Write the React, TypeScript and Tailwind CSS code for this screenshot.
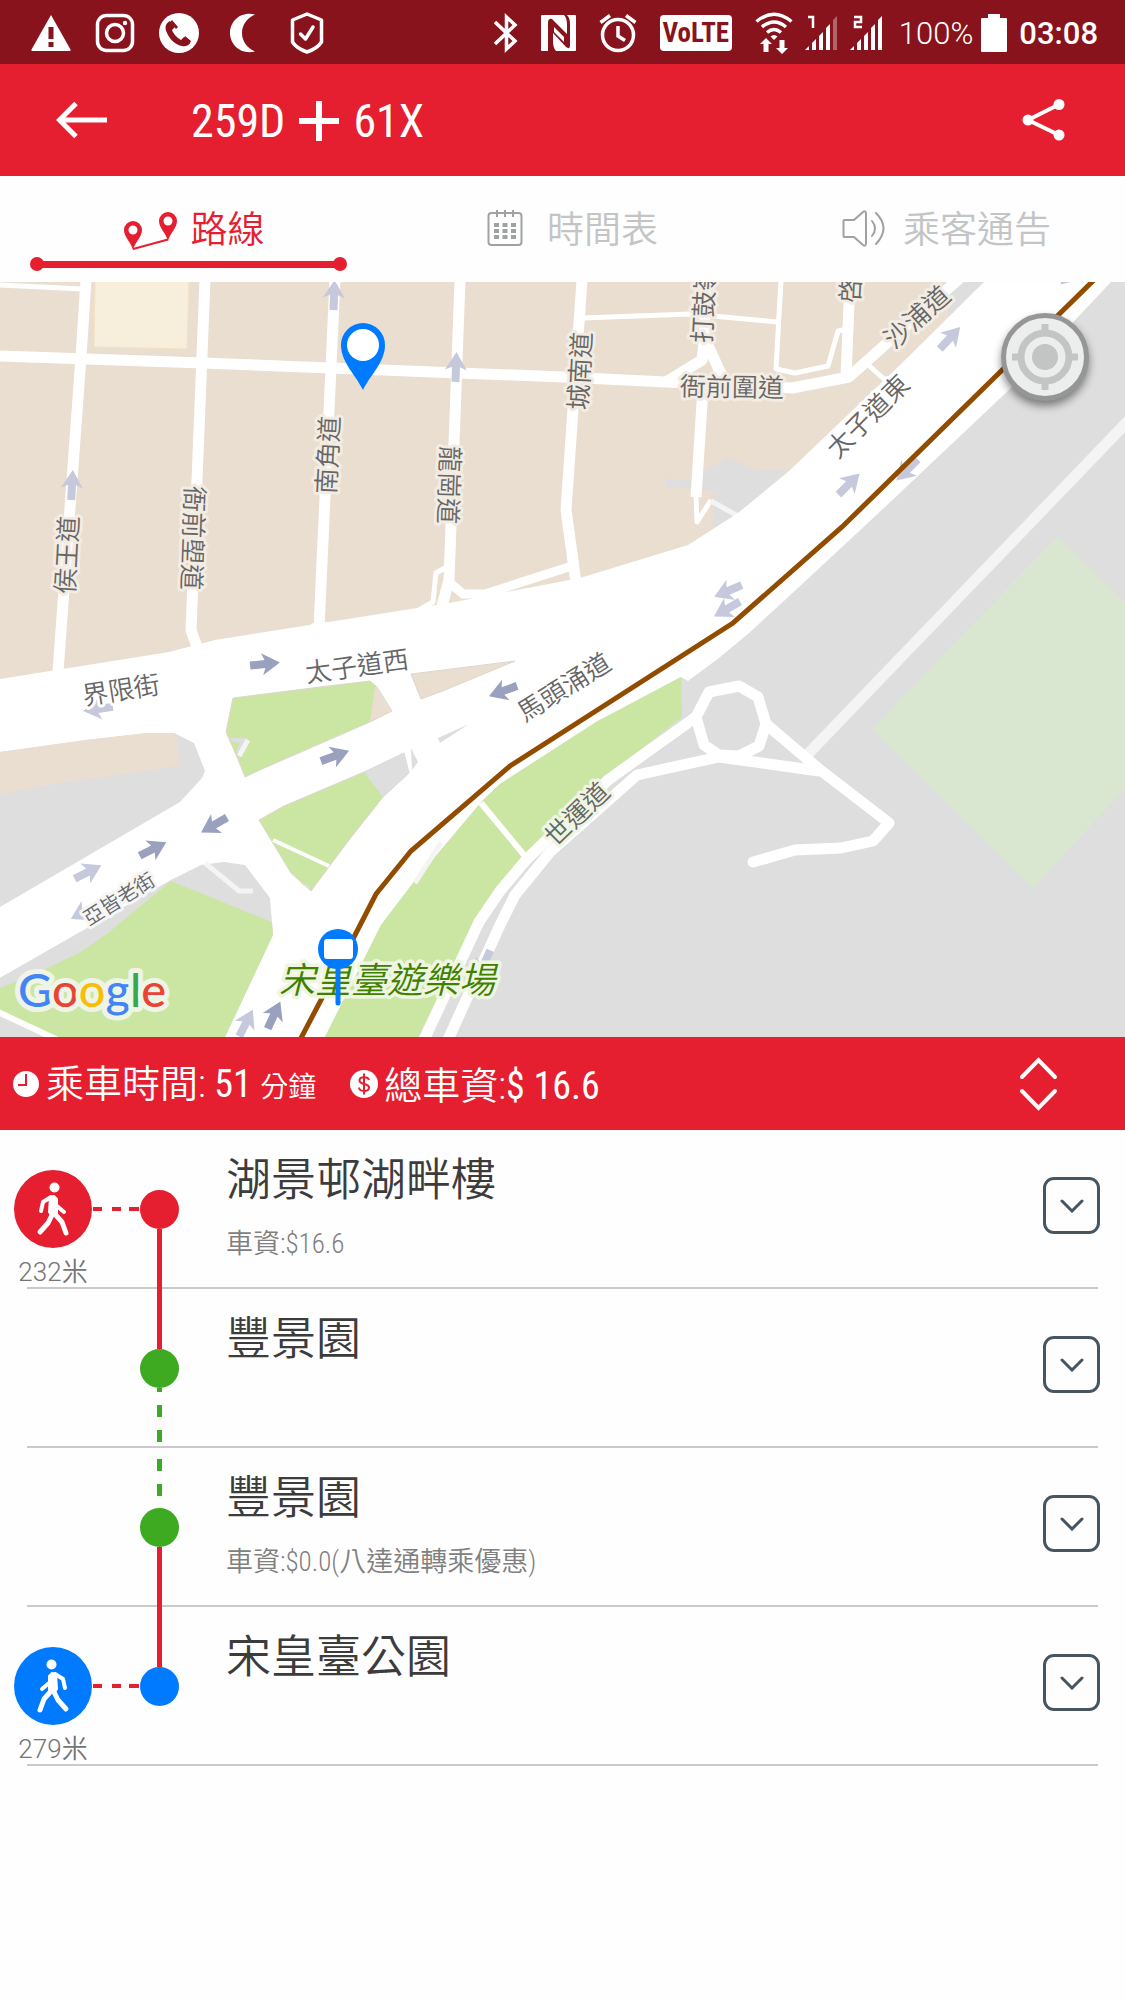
import React from 'react';

const cjk = "font-['Roboto_Condensed','Liberation_Sans_Narrow','Noto_Sans_CJK_TC',sans-serif]";
const roboto = "font-[Roboto,'Noto_Sans_CJK_TC',sans-serif]";

type Stop = {
  name: string;
  fare?: string;
  walk?: string;
  walkColor?: string;
  flip?: boolean;
  dot: string;
  above?: 'solid' | 'dashed';
  below?: 'solid' | 'dashed';
};

const stops: Stop[] = [
  { name: '湖景邨湖畔樓', fare: '車資:$16.6', walk: '232米', walkColor: 'bg-[#e51f30]', dot: 'bg-[#e51f30]', below: 'solid' },
  { name: '豐景園', dot: 'bg-[#3daa22]', above: 'solid', below: 'dashed' },
  { name: '豐景園', fare: '車資:$0.0(八達通轉乘優惠)', dot: 'bg-[#3daa22]', above: 'dashed', below: 'solid' },
  { name: '宋皇臺公園', walk: '279米', walkColor: 'bg-[#007aff]', flip: true, dot: 'bg-[#007aff]', above: 'solid' },
];

const App: React.FC = () => {
  return (
    <div className={`flex min-h-screen w-full flex-col bg-[#fefefe] ${cjk}`}>
      <StatusBar />
      <Header />
      <Tabs />
      <RouteMap />
      <Summary />
      <ol>
        {stops.map((stop, index) => (
          <StopRow key={index} stop={stop} />
        ))}
      </ol>
    </div>
  );
};

const Signal: React.FC<{ sim: string; weak?: boolean }> = ({ sim, weak }) => (
  <svg width="33" height="38" viewBox="0 0 33 38" fill="#fff">
    <path d="M0 36L4 32V36Z M7 29L11 25V36H7Z M14 22L18 18V36H14Z M21 14L25 10V36H21Z" />
    <path d="M28 6L32 2V36H28Z" opacity={weak ? 0.35 : 1} />
    <path
      d={sim === '1' ? 'M3 3H8V14' : 'M4 3H11V8H5V13H12'}
      fill="none"
      stroke="#fff"
      strokeWidth="2.5"
    />
  </svg>
);

const StatusBar: React.FC = () => (
  <div className={`flex h-16 items-center justify-between bg-[#88131c] pt-0.5 pr-[27px] pl-[31px] text-white ${roboto}`}>
    <div className="flex items-center gap-6">
      <svg width="40" height="40" viewBox="0 0 40 40">
        <path d="M20 2L39.500 36.500Q40 38 38.500 38H1.500Q0 38 0.500 36.500Z" fill="#fff" />
        <path d="M17.500 14H22.500V26H17.500Z M17.500 29H22.500V34H17.500Z" fill="#88131c" />
      </svg>
      <svg width="40" height="40" viewBox="0 0 40 40" fill="none" stroke="#fff" strokeWidth="3.500">
        <rect x="2.500" y="2.500" width="35" height="35" rx="9" />
        <circle cx="20" cy="20" r="8.500" />
        <circle cx="30" cy="10" r="2.200" fill="#fff" stroke="none" />
      </svg>
      <svg width="40" height="40" viewBox="0 0 40 40">
        <circle cx="20" cy="20" r="20" fill="#fff" />
        <path
          d="M11 8C7 10 5 14 8 20C11 27 17 32 23 33C27 34 30 32 31 30L25 24L22 27C18 25 14 20 13 17L16 14Z"
          fill="#88131c"
        />
        <path d="M13 7L19 14L17 16L11.500 9Z M26 23L32 28L30.500 31L24.500 26Z" fill="#88131c" />
      </svg>
      <svg width="40" height="40" viewBox="0 0 40 40">
        <path d="M32 1.500C18 -2 7 8 7 20C7 32 18 42 32 38.500C24 35 19 28 19 20C19 12 24 5 32 1.500Z" fill="#fff" />
      </svg>
      <svg width="40" height="42" viewBox="0 0 40 42" fill="none" stroke="#fff" strokeWidth="3.500" strokeLinejoin="round">
        <path d="M20 2L34.500 8V30C32 34 26 38 20 40C14 38 8 34 5.500 30V8Z" />
        <path d="M13.500 22L18.500 27L26 15" strokeLinecap="round" />
      </svg>
    </div>
    <div className="flex items-center gap-3">
      <div className="flex items-center gap-[23px]">
        <svg width="24" height="40" viewBox="0 0 24 40" fill="none" stroke="#fff" strokeWidth="3.500">
          <path d="M1 9L21 28L12.500 36V4L21 12L1 31" />
        </svg>
        <svg width="35" height="36" viewBox="0 0 35 36">
          <rect width="35" height="36" rx="1" fill="#fff" />
          <path d="M7 36V8Q7 3 11 4L26 19V10Q26 3 23 0H26Q29 3 29 9V30Q29 35 25 32L12 18V26Q12 33 15 36Z" fill="#88131c" />
          <path d="M13 12L23 22V27L13 17Z" fill="#fff" />
        </svg>
        <svg width="38" height="40" viewBox="0 0 38 40" fill="none" stroke="#fff" strokeWidth="3.500">
          <circle cx="19" cy="22" r="15.500" />
          <path d="M19 13V23L26 27.500 M1.500 9.500L11 2.500 M27 2.500L36.500 9.500" />
        </svg>
        <span className="flex h-9 w-[72px] items-center justify-center rounded-sm bg-white font-['Roboto_Condensed','Liberation_Sans_Narrow',sans-serif] text-[27px] leading-none font-bold text-[#88131c]">
          VoLTE
        </span>
        <svg width="38" height="42" viewBox="0 0 38 42" fill="none" stroke="#fff" strokeWidth="3.500">
          <path d="M1.500 9.500Q19 -5 36.500 9.500 M7 15Q19 5 31 15 M12 20.500Q19 14.500 26 20.500" />
          <path d="M15.500 24.500Q19 21.500 22.500 24.500L19 28Z" fill="#fff" stroke="none" />
          <path d="M11 26L17 32H13.500V40H8.500V32H5Z M27 42L21 36H24.500V28H29.500V36H33Z" fill="#fff" stroke="none" />
        </svg>
      </div>
      <Signal sim="1" weak />
      <Signal sim="2" />
      <div className="ml-1 flex items-center gap-2">
        <span className="text-[31px] leading-none font-[350]">100%</span>
        <svg width="26" height="38" viewBox="0 0 26 38" fill="#fff">
          <path d="M7 0H19V4H25Q26 4 26 5V37Q26 38 25 38H1Q0 38 0 37V5Q0 4 1 4H7Z" />
        </svg>
      </div>
      <span className="text-[31px] leading-none font-medium">03:08</span>
    </div>
  </div>
);

const Header: React.FC = () => (
  <header className="flex h-28 items-center bg-[#e51f30] pr-[60px] pl-[56px] text-white">
    <button type="button" aria-label="返回" className="mr-[84px]">
      <svg width="51" height="38" viewBox="0 0 51 38" fill="none" stroke="#fff" strokeWidth="5">
        <path d="M3 19H51 M20 2.500L3.500 19L20 35.500" />
      </svg>
    </button>
    <h1 className="flex flex-1 items-center gap-[14px] pt-0.5 text-[46px] leading-none">
      <span>259D</span>
      <svg width="40" height="40" viewBox="0 0 40 40" stroke="#fff" strokeWidth="6">
        <path d="M20 0V40 M0 20H40" />
      </svg>
      <span>61X</span>
    </h1>
    <button type="button" aria-label="分享">
      <svg width="43" height="42" viewBox="0 0 43 42" fill="#fff" stroke="#fff">
        <path d="M37 5.500L6 21L37 36" fill="none" strokeWidth="4" />
        <circle cx="6" cy="21" r="5.500" stroke="none" />
        <circle cx="37" cy="5.500" r="5.500" stroke="none" />
        <circle cx="37" cy="36" r="5.500" stroke="none" />
      </svg>
    </button>
  </header>
);

const Tabs: React.FC = () => (
  <nav className="grid h-[106px] grid-cols-3 text-[37px] leading-[44px] font-[350] text-[#c3c5c5]">
    <button type="button" className="flex flex-col items-stretch pt-[33px]">
      <span className="flex items-center justify-center gap-[14px] pl-3 text-[#e51f30]">
        <svg width="54" height="40" viewBox="0 0 54 40">
          <path
            d="M10 39C8 31 1 26 1 19A9 9 0 0 1 19 19C19 26 12 31 10 39Z M10 14.500A4.500 4.500 0 1 0 10 23.500A4.500 4.500 0 1 0 10 14.500Z"
            fill="#e51f30"
            fillRule="evenodd"
          />
          <path
            d="M45 30C43 22 36 17 36 10A9 9 0 0 1 54 10C54 17 47 22 45 30Z M45 5.500A4.500 4.500 0 1 0 45 14.500A4.500 4.500 0 1 0 45 5.500Z"
            fill="#e51f30"
            fillRule="evenodd"
          />
          <path d="M10 38L45 28.500" stroke="#e51f30" strokeWidth="2" />
        </svg>
        路線
      </span>
      <span className="mr-7 ml-[30px] mt-1 flex items-center">
        <span className="size-[14px] rounded-full bg-[#e51f30]" />
        <span className="-mx-1 h-[7px] flex-1 bg-[#e51f30]" />
        <span className="size-[14px] rounded-full bg-[#e51f30]" />
      </span>
    </button>
    <button type="button" className="flex items-start justify-center gap-6 pt-[33px] pl-5">
      <svg width="36" height="40" viewBox="0 4 36 40" fill="none" stroke="#a0a2a2" strokeWidth="2">
        <rect x="1.500" y="8" width="33" height="32" rx="3" />
        <path d="M10 5V12 M18 5V12 M26 5V12" />
        <path d="M7 20H29 M7 26H29 M7 32H29" strokeWidth="4" strokeDasharray="5 3.500" />
      </svg>
      時間表
    </button>
    <button type="button" className="flex items-start justify-center gap-[18px] pt-[33px] pl-[18px]">
      <svg width="43" height="40" viewBox="0 3 43 40" fill="none" stroke="#a0a2a2" strokeWidth="2" strokeLinejoin="round">
        <path d="M1.500 15Q1.500 14 2.500 14H12L21 6Q24 4 24 8V37Q24 41 21 39L12 31H2.500Q1.500 31 1.500 30Z" />
        <path d="M30 15Q36 22.500 30 30 M34 7Q49 22 34 38" strokeLinecap="round" />
      </svg>
      乘客通告
    </button>
  </nav>
);

const Arrow: React.FC<{ x: number; y: number; angle: number; dark?: boolean }> = ({ x, y, angle, dark }) => (
  <path
    d="M-15 -4H0L-3 -11L15 0L-3 11L0 4H-15Z"
    fill={dark ? '#9aa1be' : '#c6c9db'}
    transform={`translate(${x} ${y}) rotate(${angle})`}
  />
);

const Street: React.FC<{ x: number; y: number; angle: number; size?: number; start?: boolean; halo?: string; children: string }> = ({
  x,
  y,
  angle,
  size = 26,
  start,
  halo = '#f3ece3',
  children,
}) => (
  <text
    transform={`translate(${x} ${y}) rotate(${angle})`}
    dy="0.36em"
    textAnchor={start ? 'start' : 'middle'}
    fontSize={size}
    fill="#666"
    stroke={halo}
    strokeWidth="6"
    strokeLinejoin="round"
    paintOrder="stroke"
  >
    {children}
  </text>
);

const RouteMap: React.FC = () => (
  <div className="relative overflow-hidden font-['Noto_Sans_CJK_TC',sans-serif] font-[350]">
    <svg viewBox="0 282 1125 755" className="block w-full" role="img" aria-label="地圖">
      <rect y="282" width="1125" height="755" fill="#dedede" />
      <path d="M0 282H948V318L900 365L788 472L738 513L688 545L580 578L449 603L215 640L169 652L0 679Z" fill="#e9ded0" />
      <path d="M666 479L691 480L706 470L729 457L756 470H788L738 513L713 529V490L666 487Z" fill="#dedede" />
      <path d="M95 280H189L187 349L94 347Z" fill="#f7eedb" stroke="#f3e3bf" />

      {/* city blocks */}
      <g fill="none" stroke="#fff" strokeWidth="11" strokeLinejoin="round">
        <path d="M86 280L81 357L58 672 M205 280L191 630L198 650 M335 280L319 628 M460 280L449 580L441 610" />
        <path d="M582 280L566 510L577 590 M706 280L704 343L702 360L666 382 M707 343L720 372L732 388 M703 388L696 497" />
        <path d="M0 356L203 363L563 377L666 382L792 388L849 377L960 278 M850 280L846 377" />
        <path d="M449 582L463 594H485L572 566" strokeWidth="9" />
        <g strokeWidth="5">
          <path d="M0 285L83 289 M582 318L691 314L777 322 M781 280L776 369L795 373L828 366L838 331L848 329" />
          <path d="M445 568L436 573L433 602L412 614 M865 362L885 380 M696 495L697 522L711 500" />
          <path d="M711 501L738 516" stroke="#f4f4f4" />
          <path d="M319 622L304 632 M319 625L338 624" />
        </g>
      </g>

      {/* main roads */}
      <path
        d="M984 282L900 365L788 472L738 513L688 545L580 578L449 603L215 640L169 652L0 679V978L171 880L225 862L273 930L225 1037H325L381 925L413 883L483 800L500 784L596 722L681 677L688 681L719 658L749 633L785 600L885 507L1011 388L1111 282Z"
        fill="#fff"
      />
      <path d="M0 752L86 740L147 733H174L194 743L205 771L202 778L180 802L0 907Z" fill="#dedede" />
      <path d="M0 752L86 740L147 733H174L177 740L180 766L59 783L0 794Z" fill="#e9ded0" />
      <path d="M0 978L171 880L201 865L224 862L245 865L264 890L270 898L273 935L225 1037H0Z" fill="#dedede" />
      <path d="M171 881L272 922L273 935L225 1037H57L0 1012V988L47 968L79 953L108 933L144 903Z" fill="#cbe6a3" />
      <path d="M-2 1012L60 1041" stroke="#fff" strokeWidth="6" />
      <path d="M205 863L239 891H253" fill="none" stroke="#f4f4f4" strokeWidth="5" />
      <path d="M233 698L312 688L370 681L377 687L392 711L370 722L262 769L245 777L237 757L226 732Z" fill="#cbe6a3" stroke="#dcd7cf" />
      <path d="M375 687L377 687L392 711L370 721Z" fill="#e9ded0" />
      <path d="M230 738H248L240 754L236 752L240 743L232 742Z" fill="#dedede" />
      <path d="M248 740L239 756" stroke="#f4f4f4" strokeWidth="5" />
      <path d="M411 674L515 661L445 690L421 699Z" fill="#e9ded0" stroke="#dcd7cf" />
      <path d="M259 820L284 806L364 772L404 753L409 773L383 797L349 840L311 891L291 873Z" fill="#cbe6a3" stroke="#dcd7cf" />
      <path d="M364 772L404 753L409 773L383 797Z M290 873L302 884L311 891L309 886L300 882Z" fill="#dedede" />
      <path d="M411 748L418 762L412 770Z M438 738L469 724L440 743Z" fill="#dedede" />
      <path d="M273 840L329 866" stroke="#fff" strokeWidth="4" />

      {/* park and airport side */}
      <path d="M681 677L596 722L500 784L483 800L413 883L381 925L325 1037H418L461 953L474 920L500 887L524 857L608 775L682 717Z" fill="#cbe6a3" />
      <path d="M481 803L524 855" stroke="#fff" strokeWidth="6" />
      <path d="M441 843L415 883" stroke="#f4f4f4" strokeWidth="5" />
      <path d="M1057 537L1125 603V788L1033 888L872 729Z" fill="#d9e7d0" />
      <path d="M806 756L956 600L1130 419" fill="none" stroke="#f4f4f4" strokeWidth="11" />
      <g fill="none" stroke="#fff" strokeWidth="11" strokeLinejoin="round" strokeLinecap="round">
        <path d="M423 1042L479 922L500 891L526 860L608 780L696 717" />
        <path d="M447 1042L500 925L515 895L550 852L637 775L719 757" />
        <path d="M696 717L709 692L739 686L758 697L766 724L759 746L739 756L719 755L704 745Z" />
        <path d="M719 757L819 771 M766 724L819 769L889 823L873 841L841 848L795 850L753 862" />
      </g>

      <Arrow x={265} y={664} angle={-6} dark />
      <Arrow x={72} y={485} angle={-87} />
      <Arrow x={334} y={295} angle={-88} />
      <Arrow x={456} y={367} angle={-88} />
      <Arrow x={327} y={450} angle={-88} />
      <Arrow x={193} y={560} angle={92} />
      <Arrow x={576} y={388} angle={-87} />
      <Arrow x={950} y={338} angle={-47} />
      <Arrow x={849} y={484} angle={-45} />
      <Arrow x={907} y={470} angle={135} />
      <Arrow x={1071} y={274} angle={135} />
      <Arrow x={728} y={591} angle={157} />
      <Arrow x={727} y={609} angle={150} />
      <Arrow x={503} y={691} angle={160} dark />
      <Arrow x={335} y={756} angle={-20} dark />
      <Arrow x={214} y={825} angle={150} dark />
      <Arrow x={153} y={849} angle={-27} dark />
      <Arrow x={88} y={872} angle={-27} />
      <Arrow x={84} y={912} angle={152} />
      <Arrow x={98} y={709} angle={172} />
      <Arrow x={246} y={1023} angle={-63} />
      <Arrow x={274} y={1015} angle={-65} dark />
      <Arrow x={484} y={964} angle={115} />
      <Arrow x={590} y={668} angle={150} />

      <path d="M1096 278L842 527L733 623L510 766L411 851L376 894L354 937L300 1040" fill="none" stroke="#914c00" strokeWidth="5" />

      <Street x={67} y={555} angle={-87}>侯王道</Street>
      <Street x={193} y={538} angle={92}>衙前塱道</Street>
      <Street x={328} y={455} angle={-87}>南角道</Street>
      <Street x={449} y={485} angle={92}>龍崗道</Street>
      <Street x={580} y={371} angle={-87}>城南道</Street>
      <Street x={702} y={343} angle={-87} start>打鼓嶺道</Street>
      <Street x={850} y={303} angle={-87} start>啓德道</Street>
      <Street x={732} y={387} angle={1}>衙前圍道</Street>
      <Street x={917} y={317} angle={-42}>沙浦道</Street>
      <Street x={868} y={416} angle={-45} halo="#fff">太子道東</Street>
      <Street x={357} y={666} angle={-8} halo="#fff">太子道西</Street>
      <Street x={121} y={690} angle={-9} halo="#fff">界限街</Street>
      <Street x={564} y={687} angle={-32} halo="#fff">馬頭涌道</Street>
      <Street x={577} y={814} angle={-44} halo="#eef6e2">世運道</Street>
      <Street x={119} y={899} angle={-32} size={20} halo="#f6f6f6">亞皆老街</Street>

      <text
        x="387"
        y="993"
        textAnchor="middle"
        fontSize="36"
        fontStyle="italic"
        fill="#3f8000"
        stroke="#eef6e2"
        strokeWidth="7"
        strokeLinejoin="round"
        paintOrder="stroke"
      >
        宋皇臺遊樂場
      </text>

      <text
        x="18"
        y="1007"
        fontSize="47"
        className="font-[Lato,sans-serif] font-medium"
        stroke="#eef4e6"
        strokeWidth="10"
        strokeLinejoin="round"
        paintOrder="stroke"
      >
        <tspan fill="#4285f4">G</tspan>
        <tspan fill="#ea4335">o</tspan>
        <tspan fill="#fbbc05">o</tspan>
        <tspan fill="#4285f4">g</tspan>
        <tspan fill="#34a853">l</tspan>
        <tspan fill="#ea4335">e</tspan>
      </text>

      {/* destination pin */}
      <path d="M363 390C355 374 341 362 341 345A22 22 0 0 1 385 345C385 362 371 374 363 390Z" fill="#007aff" />
      <circle cx="363" cy="345" r="16" fill="#fff" />

      {/* bus stop pin */}
      <path d="M338 950V1003" stroke="#007aff" strokeWidth="5" strokeLinecap="round" />
      <circle cx="338" cy="949" r="20" fill="#007aff" />
      <rect x="324" y="939" width="29" height="20" rx="3" fill="#fff" />
    </svg>

    <button
      type="button"
      aria-label="我的位置"
      className="absolute top-[31px] right-9 flex size-[88px] items-center justify-center rounded-full border-[5px] border-[#969696] bg-[#eceeee] shadow-[0_5px_8px_rgba(0,0,0,0.45)]"
    >
      <svg width="68" height="68" viewBox="0 0 68 68" fill="none" stroke="#c3c4c4">
        <circle cx="34" cy="34" r="24" strokeWidth="7" />
        <path d="M34 1V12 M34 56V67 M1 34H12 M56 34H67" strokeWidth="7" />
        <circle cx="34" cy="34" r="13" fill="#c3c4c4" stroke="none" />
      </svg>
    </button>
  </div>
);

const Summary: React.FC = () => (
  <section className="flex h-[93px] items-center bg-[#e51f30] pr-[67px] pl-[13px] text-[38px] leading-[54px] font-[350] text-white">
    <svg width="26" height="26" viewBox="0 0 26 26" className="mr-[7px] shrink-0">
      <circle cx="13" cy="13" r="13" fill="#fff" />
      <path d="M13 3V14H5" fill="none" stroke="#e51f30" strokeWidth="2" />
    </svg>
    <p className="mr-[34px] pt-1">
      乘車時間: <span className="font-normal">51</span> <span className="text-[28px]">分鐘</span>
    </p>
    <svg width="28" height="28" viewBox="0 0 28 28" className="mr-1.5 shrink-0">
      <circle cx="14" cy="14" r="14" fill="#fff" />
      <path
        d="M19 10C18 6.500 9.500 6 9.500 10.500C9.500 15 19 13 19 17.500C19 22.500 9.500 22 9 17.500 M14 3.500V24.500"
        fill="none"
        stroke="#e51f30"
        strokeWidth="2"
      />
    </svg>
    <p className="flex-1 pt-1">
      總車資:<span className="font-normal">$ 16.6</span>
    </p>
    <button type="button" aria-label="展開">
      <svg width="39" height="54" viewBox="0 0 39 54" fill="none" stroke="#fff" strokeWidth="4" strokeLinecap="round">
        <path d="M3 20L19.500 3L36 20 M3 34L19.500 51L36 34" />
      </svg>
    </button>
  </section>
);

const Walker: React.FC<{ flip?: boolean }> = ({ flip }) => (
  <svg
    width="78"
    height="78"
    viewBox="0 0 78 78"
    fill="none"
    stroke="#fff"
    strokeWidth="5"
    strokeLinecap="round"
    strokeLinejoin="round"
    className={flip ? '-scale-x-100' : ''}
  >
    <circle cx="40.500" cy="17.500" r="5" fill="#fff" stroke="none" />
    <path d="M36 27L40 26L43 29V43L37 45L35 42Z" fill="#fff" strokeWidth="2" />
    <path d="M37 27L29 32L27 41 M43 36L50 42" strokeWidth="4" />
    <path d="M38 45L34 53L26 62 M40 43L48 52L52 63" />
  </svg>
);

const Connector: React.FC<{ kind?: 'solid' | 'dashed'; offset: number }> = ({ kind, offset }) => (
  <svg width="5" height="60" viewBox="0 0 5 60" className="flex-1">
    {kind === 'solid' && <path d="M2.500 0V60" stroke="#e51f30" strokeWidth="5" />}
    {kind === 'dashed' && (
      <path d="M2.500 0V60" stroke="#3daa22" strokeWidth="5" strokeDasharray="12 13" strokeDashoffset={offset} />
    )}
  </svg>
);

const StopRow: React.FC<{ stop: Stop }> = ({ stop }) => (
  <li>
    <div className="flex h-[159px] pr-[25px] pl-[14px]">
      <div className="flex w-[78px] flex-col items-center pt-10">
        {stop.walk && (
          <>
            <div className={`size-[78px] shrink-0 rounded-full ${stop.walkColor}`}>
              <Walker flip={stop.flip} />
            </div>
            <span className={`text-[26px] leading-[48px] font-[350] whitespace-nowrap text-[#757575] ${roboto}`}>{stop.walk}</span>
          </>
        )}
      </div>
      <div className="w-[47px] pt-[77px]">
        {stop.walk && (
          <svg width="47" height="4" viewBox="0 0 47 4">
            <path d="M1 2H10 M20 2H29 M37 2H47" stroke="#e51f30" strokeWidth="4" />
          </svg>
        )}
      </div>
      <div className="flex w-10 flex-col items-center">
        <Connector kind={stop.above} offset={14} />
        <div className={`size-[39px] shrink-0 rounded-full ${stop.dot}`} />
        <Connector kind={stop.below} offset={8} />
      </div>
      <div className="flex-1 pt-6 pl-[47px] font-[350]">
        <h2 className="text-[45px] leading-[54px] text-[#3c3c3c]">{stop.name}</h2>
        {stop.fare && <p className="mt-4 text-[27px] leading-10 text-[#808080]">{stop.fare}</p>}
      </div>
      <button
        type="button"
        aria-label={`${stop.name} 詳情`}
        className="mt-[47px] flex size-[57px] items-center justify-center rounded-[11px] border-[3px] border-[#465560]"
      >
        <svg width="24" height="14" viewBox="0 0 24 14" fill="none" stroke="#465560" strokeWidth="3" strokeLinecap="round">
          <path d="M2 2L12 12L22 2" />
        </svg>
      </button>
    </div>
    <hr className="mx-[27px] -mt-0.5 border-t-2 border-[#cacaca]" />
  </li>
);

export default App;
